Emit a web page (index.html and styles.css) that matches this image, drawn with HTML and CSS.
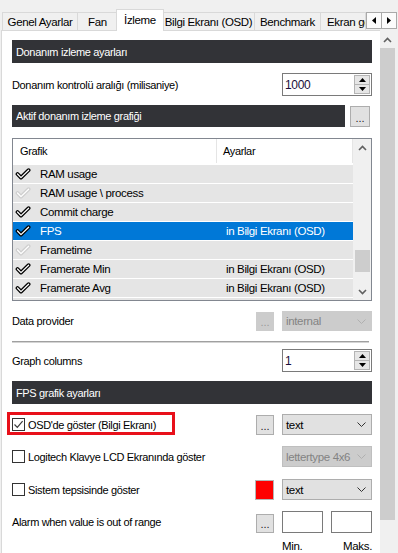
FILE: index.html
```html
<!DOCTYPE html>
<html lang="tr">
<head>
<meta charset="utf-8">
<title>İzleme</title>
<link rel="stylesheet" href="styles.css">
</head>
<body>
<svg class="defs" width="0" height="0" aria-hidden="true">
  <symbol id="chk" viewBox="0 0 16 12">
    <path d="M2.5 6 L6 9.6 L13.6 2.2" fill="none" stroke="currentColor" stroke-width="3.8" stroke-linecap="round" stroke-linejoin="round"/>
    <path d="M2.5 6 L6 9.6 L13.6 2.2" fill="none" stroke="#fff" stroke-width="1.3" stroke-linecap="round" stroke-linejoin="round"/>
  </symbol>
  <symbol id="chev" viewBox="0 0 9 5">
    <path d="M0.5 0.5 L4.5 4.5 L8.5 0.5" fill="none" stroke="currentColor" stroke-width="1"/>
  </symbol>
</svg>
<div class="app">
  <div class="tabbar">
    <div class="tabs">
      <div class="tab w1">Genel Ayarlar</div>
      <div class="tab w2">Fan</div>
      <div class="tab w3 active">İzleme</div>
      <div class="tab w4">Bilgi Ekranı (OSD)</div>
      <div class="tab w5">Benchmark</div>
      <div class="tab w6">Ekran görüntüsü</div>
    </div>
    <div class="tabnav">
      <div class="navbtn"><svg width="4" height="7" viewBox="0 0 4 7"><path d="M4 0 L0 3.5 L4 7 Z" fill="#000"/></svg></div>
      <div class="navbtn"><svg width="4" height="7" viewBox="0 0 4 7"><path d="M0 0 L4 3.5 L0 7 Z" fill="#000"/></svg></div>
    </div>
  </div>
  <div class="main">
    <div class="panel">
      <div class="hdr">Donanım izleme ayarları</div>

      <div class="row r1">
        <div class="lbl">Donanım kontrolü aralığı (milisaniye)</div>
        <div class="spin">
          <div class="spin-val">1000</div>
          <div class="spin-btns">
            <div class="sb"><svg width="7" height="4" viewBox="0 0 7 4"><path d="M0 4 L3.5 0 L7 4 Z" fill="#000"/></svg></div>
            <div class="sb"><svg width="7" height="4" viewBox="0 0 7 4"><path d="M0 0 L3.5 4 L7 0 Z" fill="#000"/></svg></div>
          </div>
        </div>
      </div>

      <div class="hrow r2">
        <div class="hdr grow">Aktif donanım izleme grafiği</div>
        <div class="dots big">...</div>
      </div>

      <div class="list">
        <div class="list-main">
          <div class="list-head">
            <div class="c1">Grafik</div>
            <div class="c2">Ayarlar</div>
          </div>
          <div class="item"><svg class="ck"><use href="#chk"/></svg><span class="t1">RAM usage</span><span class="t2"></span></div>
          <div class="item off"><svg class="ck"><use href="#chk"/></svg><span class="t1">RAM usage \ process</span><span class="t2"></span></div>
          <div class="item"><svg class="ck"><use href="#chk"/></svg><span class="t1">Commit charge</span><span class="t2"></span></div>
          <div class="item sel"><svg class="ck"><use href="#chk"/></svg><span class="t1">FPS</span><span class="t2">in Bilgi Ekranı (OSD)</span></div>
          <div class="item off"><svg class="ck"><use href="#chk"/></svg><span class="t1">Frametime</span><span class="t2"></span></div>
          <div class="item"><svg class="ck"><use href="#chk"/></svg><span class="t1">Framerate Min</span><span class="t2">in Bilgi Ekranı (OSD)</span></div>
          <div class="item"><svg class="ck"><use href="#chk"/></svg><span class="t1">Framerate Avg</span><span class="t2">in Bilgi Ekranı (OSD)</span></div>
          <div class="item"><svg class="ck"><use href="#chk"/></svg></div>
        </div>
        <div class="lscroll">
          <div class="arrow up"><svg width="9" height="6" viewBox="0 0 9 6"><path d="M1 5 L4.5 1.5 L8 5" fill="none" stroke="#606060" stroke-width="1.6"/></svg></div>
          <div class="ltrack"><div class="lthumb"></div></div>
          <div class="arrow down"><svg width="9" height="6" viewBox="0 0 9 6"><path d="M1 1 L4.5 4.5 L8 1" fill="none" stroke="#606060" stroke-width="1.6"/></svg></div>
        </div>
      </div>

      <div class="row r3">
        <div class="lbl">Data provider</div>
        <div class="dots dis">...</div>
        <div class="combo dis"><span>internal</span><svg class="chev"><use href="#chev"/></svg></div>
      </div>

      <div class="row sep-row"><div class="sep"></div></div>

      <div class="row r4">
        <div class="lbl">Graph columns</div>
        <div class="spin">
          <div class="spin-val">1</div>
          <div class="spin-btns">
            <div class="sb"><svg width="7" height="4" viewBox="0 0 7 4"><path d="M0 4 L3.5 0 L7 4 Z" fill="#000"/></svg></div>
            <div class="sb"><svg width="7" height="4" viewBox="0 0 7 4"><path d="M0 0 L3.5 4 L7 0 Z" fill="#000"/></svg></div>
          </div>
        </div>
      </div>

      <div class="hdr r5">FPS grafik ayarları</div>

      <div class="row r6 hl">
        <div class="lbl chk"><span class="box on"><svg width="11" height="11" viewBox="0 0 11 11"><path d="M1.5 5.5 L4.3 8.3 L9.6 2.2" fill="none" stroke="#3b3b3b" stroke-width="1.2"/></svg></span>OSD'de göster (Bilgi Ekranı)</div>
        <div class="dots">...</div>
        <div class="combo"><span>text</span><svg class="chev"><use href="#chev"/></svg></div>
      </div>

      <div class="row r7">
        <div class="lbl chk"><span class="box"></span>Logitech Klavye LCD Ekranında göster</div>
        <div class="combo dis"><span>lettertype 4x6</span><svg class="chev"><use href="#chev"/></svg></div>
      </div>

      <div class="row r8">
        <div class="lbl chk"><span class="box"></span>Sistem tepsisinde göster</div>
        <div class="swatch"></div>
        <div class="combo"><span>text</span><svg class="chev"><use href="#chev"/></svg></div>
      </div>

      <div class="row r9">
        <div class="lbl">Alarm when value is out of range</div>
        <div class="dots">...</div>
        <div class="field"></div>
        <div class="field"></div>
      </div>

      <div class="minmax">
        <span>Min.</span><span>Maks.</span>
      </div>
    </div>
    <div class="vscroll">
      <div class="varrow"><svg width="9" height="6" viewBox="0 0 9 6"><path d="M1 5 L4.5 1.5 L8 5" fill="none" stroke="#606060" stroke-width="1.6"/></svg></div>
      <div class="vthumb"></div>
    </div>
  </div>
</div>
</body>
</html>
```

FILE: styles.css
```css
*, *::before, *::after { box-sizing: border-box; }
html, body { margin: 0; padding: 0; }
body {
  width: 398px;
  height: 553px;
  overflow: hidden;
  background: #f0f0f0;
  font-family: "Liberation Sans", Arial, sans-serif;
  font-size: 11px;
  letter-spacing: -0.35px;
  color: #000;
}
.defs { position: absolute; width: 0; height: 0; overflow: hidden; }

.app { display: flex; flex-direction: column; height: 553px; }

/* tabs */
.tabbar { height: 30px; display: flex; align-items: flex-end; position: relative; flex: none; }
.tabs { display: flex; align-items: flex-end; padding-left: 2px; height: 30px; }
.tab {
  flex: none;
  height: 18px;
  border: 1px solid #d9d9d9;
  border-bottom: none;
  margin-right: -1px;
  background: #f0f0f0;
  display: flex;
  align-items: center;
  justify-content: center;
  white-space: nowrap;
  padding-top: 1px;
  font-size: 11.5px;
}
.tab.active {
  height: 22px;
  margin-bottom: -1px;
  margin-left: -1px;
  margin-right: -2px;
  background: #fff;
  position: relative;
  z-index: 1;
  padding-top: 0;
  padding-bottom: 2px;
}
.w1 { width: 76px; }
.w2 { width: 41px; }
.w3 { width: 48px; }
.w4 { width: 93px; }
.w5 { width: 67px; }
.w6 { width: 46px; overflow: hidden; justify-content: flex-start; padding-left: 6px; }
.tabnav { position: absolute; right: 1px; top: 12px; display: flex; z-index: 2; }
.navbtn {
  width: 16px; height: 17px;
  border: 1px solid #a9a9a9;
  background: #fbfbfb;
  margin-left: -1px;
  display: flex; align-items: center; justify-content: center;
}

/* main */
.main { flex: 1; display: flex; min-height: 0; }
.panel {
  width: 379px;
  margin-left: 1px;
  border-left: 1px solid #d9d9d9;
  border-top: 1px solid #d9d9d9;
  background: #fff;
  padding: 9px 8px 0 10px;
  display: flex;
  flex-direction: column;
}
.vscroll { width: 18px; margin-top: 1px; display: flex; flex-direction: column; background: #f0f0f0; }
.varrow { height: 17px; display: flex; align-items: center; justify-content: center; padding-right: 3px; }
.vthumb { height: 472px; width: 15px; background: #cdcdcd; }

/* headers */
.hdr {
  height: 23px;
  background: #323337;
  color: #fff;
  display: flex;
  align-items: center;
  padding-left: 4px;
  flex: none;
}
.hrow { display: flex; align-items: flex-start; height: 22px; flex: none; }
.hrow .hdr { height: 22px; width: 333px; }
.grow { flex: none; }

/* rows */
.row { display: flex; align-items: center; flex: none; }
.lbl { flex: 1; white-space: nowrap; }
.r1 { margin-top: 10px; height: 23px; }
.r2 { margin-top: 9px; }
.r3 { margin-top: 10px; height: 20px; }
.r4 { margin-top: 6px; height: 23px; }
.r5 { margin-top: 9px; }
.r6 { margin-top: 10px; height: 21px; }
.r7 { margin-top: 11px; height: 21px; }
.r8 { margin-top: 12px; height: 21px; }
.r9 { margin-top: 11px; height: 22px; }

.sep-row { margin-top: 10px; height: 2px; align-items: stretch; }
.sep {
  width: 357px;
  height: 2px;
  border-top: 1px solid #a0a0a0;
  border-bottom: 1px solid #d4d4d4;
}

/* spin box */
.spin {
  width: 90px; height: 23px;
  border: 1px solid #7a7a7a;
  background: #fff;
  display: flex;
}
.spin-val { flex: 1; padding-left: 2px; display: flex; align-items: center; color: #1a0f3a; font-size: 12px; }
.spin-btns { width: 16px; margin: 1px 1px 1px 0; display: flex; flex-direction: column; }
.sb {
  flex: 1;
  background: #e6e6e6;
  border: 1px solid #b4b4b4;
  display: flex; align-items: center; justify-content: center;
}
.sb + .sb { border-top: none; }

/* dots button */
.dots {
  width: 18px; height: 20px;
  background: #e1e1e1;
  border: 1px solid #adadad;
  margin-right: 8px;
  display: flex; align-items: flex-end; justify-content: center;
  padding-bottom: 3px;
  font-size: 11px;
  line-height: 10px;
  letter-spacing: 0;
  color: #222;
}
.dots.big { width: 20px; height: 21px; margin: 1px 0 0 5px; }
.dots.dis { background: #cccccc; border-color: #cccccc; color: #9a9a9a; height: 19px; }
.r9 .dots { height: 19px; margin-top: 3px; }

/* combo */
.combo {
  width: 90px; height: 21px;
  background: #e1e1e1;
  border: 1px solid #adadad;
  display: flex; align-items: center; justify-content: space-between;
  padding: 0 5px 0 3px;
  white-space: nowrap;
  font-size: 11.5px;
}
.combo.dis { background: #cccccc; border-color: #bfbfbf; color: #838383; }
.r3 .combo { height: 20px; border-color: #cccccc; }
.chev { width: 9px; height: 5px; color: #333; flex: none; }
.combo.dis .chev { color: #b0b0b0; }

.swatch {
  width: 19px; height: 20px;
  background: #ff0000;
  border: 1px solid #b5b5b5;
  margin-right: 8px;
}

.field {
  width: 41px; height: 22px;
  border: 1px solid #7a7a7a;
  background: #fff;
}
.field + .field { margin-left: 8px; }

.minmax {
  margin-top: 6px;
  height: 13px;
  width: 90px;
  margin-left: auto;
  display: flex;
  justify-content: space-between;
  align-items: center;
  flex: none;
  font-size: 11.5px;
}

/* checkboxes */
.chk { display: flex; align-items: center; gap: 3px; }
.box {
  width: 13px; height: 13px;
  border: 1px solid #333;
  background: #fff;
  flex: none;
  display: flex; align-items: center; justify-content: center;
}
.hl { position: relative; }
.hl::after {
  content: "";
  position: absolute;
  left: -5px; top: -2px;
  width: 168px; height: 23px;
  border: 3px solid #e8101a;
  pointer-events: none;
}

/* list view */
.list {
  margin-top: 11px;
  height: 163px;
  border: 1px solid #828790;
  background: #fff;
  display: flex;
  flex: none;
  overflow: hidden;
}
.list-main { flex: 1; display: flex; flex-direction: column; overflow: hidden; }
.list-head { height: 25px; display: flex; flex: none; padding-bottom: 1px; }
.list-head .c1 { width: 204px; border-right: 1px solid #e5e5e5; padding-left: 7px; display: flex; align-items: center; }
.list-head .c2 { flex: 1; padding-left: 6px; display: flex; align-items: center; border-right: 1px solid #e5e5e5; }
.item {
  height: 19px;
  border-top: 1px solid #fff;
  background: #e5e5e5;
  display: flex;
  align-items: center;
  flex: none;
  color: #000;
  font-size: 11.5px;
}
.item .ck { width: 16px; height: 12px; margin-left: 2px; color: #000; flex: none; }
.item.off .ck { color: #cfcfcf; }
.item .t1 { width: 186px; padding-left: 9px; white-space: nowrap; }
.item .t2 { padding-left: 9px; white-space: nowrap; }
.item.sel { background: #0078d7; color: #fff; }
.lscroll { width: 18px; background: #f0f0f0; display: flex; flex-direction: column; }
.arrow { height: 17px; display: flex; align-items: center; justify-content: center; flex: none; }
.ltrack { flex: 1; padding-top: 94px; display: flex; justify-content: center; }
.lthumb { width: 15px; height: 22px; background: #cdcdcd; }
```
